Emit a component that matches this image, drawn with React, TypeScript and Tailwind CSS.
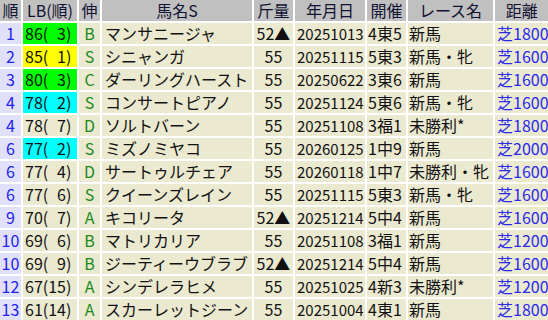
import React from 'react'

interface Row {
  rank: string
  lb: string
  lbColor?: string
  grow: string
  name: string
  weight: string
  date: string
  venue: string
  race: string
  dist: string
}

const rows: Row[] = [
  { rank: '1', lb: '86( 3)', lbColor: 'bg-[#00ff00]', grow: 'B', name: 'マンサニージャ', weight: '52▲', date: '20251013', venue: '4東5', race: '新馬', dist: '芝1800' },
  { rank: '2', lb: '85( 1)', lbColor: 'bg-[#ffff00]', grow: 'S', name: 'シニャンガ', weight: '55', date: '20251115', venue: '5東3', race: '新馬・牝', dist: '芝1600' },
  { rank: '3', lb: '80( 3)', lbColor: 'bg-[#00ff00]', grow: 'C', name: 'ダーリングハースト', weight: '55', date: '20250622', venue: '3東6', race: '新馬', dist: '芝1600' },
  { rank: '4', lb: '78( 2)', lbColor: 'bg-[#00ffff]', grow: 'S', name: 'コンサートピアノ', weight: '55', date: '20251124', venue: '5東6', race: '新馬・牝', dist: '芝1600' },
  { rank: '4', lb: '78( 7)', grow: 'D', name: 'ソルトバーン', weight: '55', date: '20251108', venue: '3福1', race: '未勝利*', dist: '芝1800' },
  { rank: '6', lb: '77( 2)', lbColor: 'bg-[#00ffff]', grow: 'S', name: 'ミズノミヤコ', weight: '55', date: '20260125', venue: '1中9', race: '新馬', dist: '芝2000' },
  { rank: '6', lb: '77( 4)', grow: 'D', name: 'サートゥルチェア', weight: '55', date: '20260118', venue: '1中7', race: '未勝利・牝', dist: '芝1600' },
  { rank: '6', lb: '77( 6)', grow: 'S', name: 'クイーンズレイン', weight: '55', date: '20251115', venue: '5東3', race: '新馬・牝', dist: '芝1600' },
  { rank: '9', lb: '70( 7)', grow: 'A', name: 'キコリータ', weight: '52▲', date: '20251214', venue: '5中4', race: '新馬', dist: '芝1600' },
  { rank: '10', lb: '69( 6)', grow: 'B', name: 'マトリカリア', weight: '55', date: '20251108', venue: '3福1', race: '新馬', dist: '芝1200' },
  { rank: '10', lb: '69( 9)', grow: 'B', name: 'ジーティーウブラブ', weight: '52▲', date: '20251214', venue: '5中4', race: '新馬', dist: '芝1600' },
  { rank: '12', lb: '67(15)', grow: 'A', name: 'シンデレラヒメ', weight: '55', date: '20251025', venue: '4新3', race: '未勝利*', dist: '芝1200' },
  { rank: '13', lb: '61(14)', grow: 'A', name: 'スカーレットジーン', weight: '55', date: '20251004', venue: '4東1', race: '新馬', dist: '芝1800' },
]

const headers = ['順', 'LB(順)', '伸', '馬名S', '斤量', '年月日', '開催', 'レース名', '距離']

const cell = 'h-[21px] leading-[21px] whitespace-pre'
const body = 'bg-[#ebe9d0] text-[#111]'

// single-digit ranks are padded with a blank as wide as a digit
function Lb({ text }: { text: string }) {
  return (
    <>
      {text.split('').map((ch, i) =>
        ch === ' ' ? (
          <span key={i} className="invisible">0</span>
        ) : (
          <span key={i}>{ch}</span>
        )
      )}
    </>
  )
}

export default function App() {
  return (
    <div
      className="w-[548px] h-[320px] overflow-hidden bg-white text-[16px]"
      style={{ fontFamily: '"Noto Sans CJK JP", "Noto Sans", sans-serif' }}
    >
      <div className="grid grid-cols-[21px_54px_21px_150px_39px_70px_39px_85px_1fr] gap-[2px]">
        {headers.map((h) => (
          <div key={h} className={`${cell} bg-[#c0c0c0] text-[#111133] text-center`}>
            {h}
          </div>
        ))}
        {rows.map((r, i) => (
          <React.Fragment key={i}>
            <div className={`${cell} bg-[#e0e0fa] text-[#2222ee] text-center`}>{r.rank}</div>
            <div className={`${cell} ${r.lbColor ?? 'bg-[#ebe9d0]'} text-[#111] pl-[2px]`}>
              <Lb text={r.lb} />
            </div>
            <div className={`${cell} ${body} text-center !text-[#1a8a1a]`}>{r.grow}</div>
            <div className={`${cell} ${body} pl-[3px]`}>{r.name}</div>
            <div className={`${cell} ${body} text-center`}>{r.weight}</div>
            <div className={`${cell} ${body} pl-[2px] text-[15px]`}>{r.date}</div>
            <div className={`${cell} ${body} pl-[1px]`}>{r.venue}</div>
            <div className={`${cell} ${body} pl-[1px]`}>{r.race}</div>
            <div className={`${cell} ${body} pl-[2px] !text-[#2a2aee]`}>{r.dist}</div>
          </React.Fragment>
        ))}
      </div>
    </div>
  )
}
